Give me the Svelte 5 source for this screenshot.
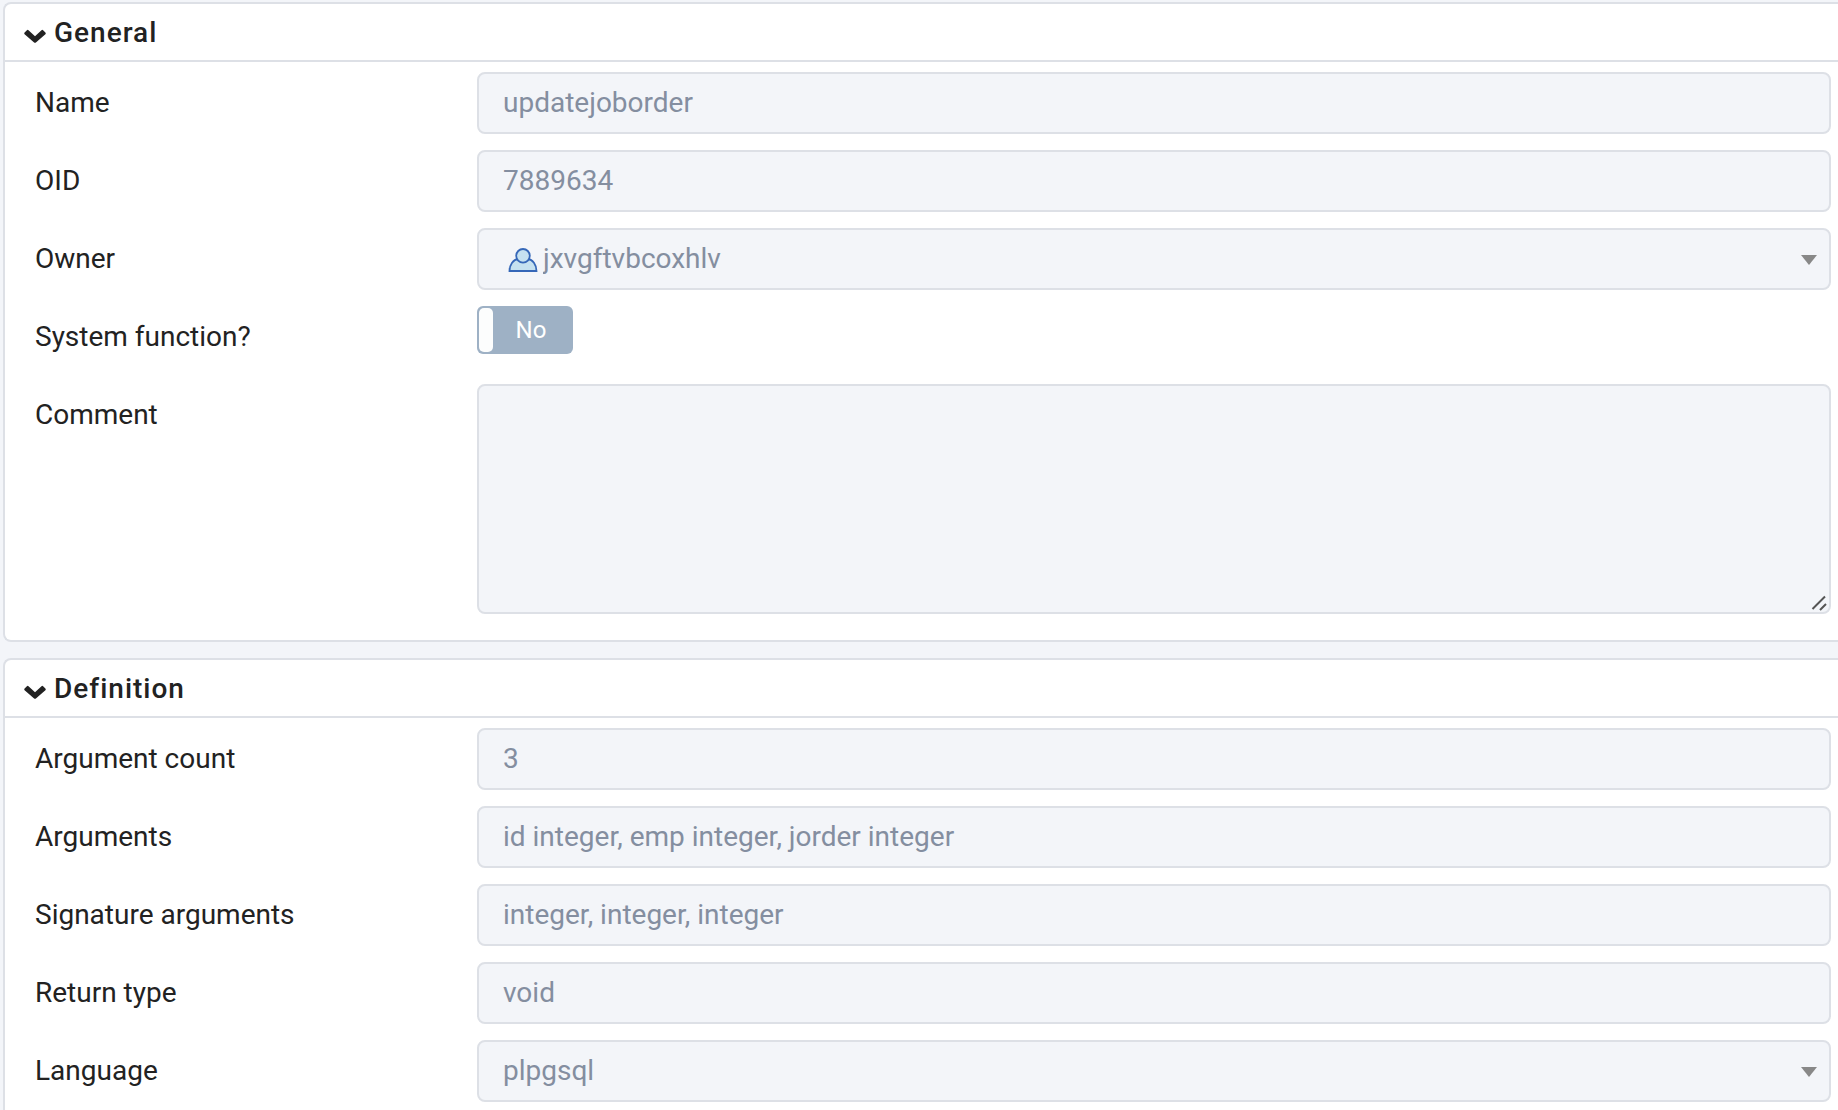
<script>
  let groups = $state([
    {
      id: 'general',
      title: 'General',
      open: true,
      fields: [
        { id: 'name', label: 'Name', type: 'text', value: 'updatejoborder' },
        { id: 'oid', label: 'OID', type: 'text', value: '7889634' },
        { id: 'owner', label: 'Owner', type: 'select', icon: 'role', value: 'jxvgftvbcoxhlv' },
        { id: 'sysfunc', label: 'System function?', type: 'switch', value: false },
        { id: 'comment', label: 'Comment', type: 'multiline', value: '' }
      ]
    },
    {
      id: 'definition',
      title: 'Definition',
      open: true,
      fields: [
        { id: 'pronargs', label: 'Argument count', type: 'text', value: '3' },
        { id: 'proargs', label: 'Arguments', type: 'text', value: 'id integer, emp integer, jorder integer' },
        { id: 'proargtypes', label: 'Signature arguments', type: 'text', value: 'integer, integer, integer' },
        { id: 'prorettype', label: 'Return type', type: 'text', value: 'void' },
        { id: 'lanname', label: 'Language', type: 'select', value: 'plpgsql' }
      ]
    }
  ]);
</script>

<main class="properties">
  {#each groups as group (group.id)}
    <section class="group">
      <h2 class:closed={!group.open}>
        <button type="button" aria-expanded={group.open} onclick={() => (group.open = !group.open)}>
          <svg class="chevron" viewBox="0 0 22 14" aria-hidden="true">
            <path d="M.6 3.6 2.9 1.2Q3.7.5 4.5 1.2L11 7.3l6.5-6.1q.8-.7 1.6 0l2.3 2.4q.7.8 0 1.6l-9.5 8.2q-.9.8-1.8 0L.6 5.2q-.7-.8 0-1.6z" />
          </svg>
          {group.title}
        </button>
      </h2>

      {#if group.open}
        <div class="fields">
          {#each group.fields as field (field.id)}
            <div class="row">
              <label for={field.id}>{field.label}</label>

              {#if field.type === 'text'}
                <input class="control" id={field.id} type="text" value={field.value} disabled />
              {:else if field.type === 'select'}
                <div class="stack">
                  <select class="control" class:with-icon={field.icon} id={field.id} disabled>
                    <option>{field.value}</option>
                  </select>
                  {#if field.icon}
                    <svg class="role" viewBox="0 0 30 24" aria-hidden="true">
                      <path d="M1.500 23C1.500 16.500 5.500 11.500 10 11h10c4.500.500 8.500 5.500 8.500 12z" />
                      <circle cx="15" cy="7.800" r="6.800" />
                    </svg>
                  {/if}
                  <svg class="arrow" viewBox="0 0 16 10" aria-hidden="true">
                    <path d="M0 0h16L8 10z" />
                  </svg>
                </div>
              {:else if field.type === 'switch'}
                <div class="stack switch">
                  <input id={field.id} type="checkbox" checked={field.value} disabled />
                  <span class="handle"></span>
                  <span class="state">{field.value ? 'Yes' : 'No'}</span>
                </div>
              {:else}
                <div class="stack">
                  <textarea class="control" id={field.id} value={field.value} disabled></textarea>
                  <svg class="grip" viewBox="0 0 16 16" aria-hidden="true">
                    <path d="M1.500 14 14 1.500M9 15l6-6" />
                  </svg>
                </div>
              {/if}
            </div>
          {/each}
        </div>
      {/if}
    </section>
  {/each}
</main>

<style>
  :global(body) {
    margin: 0;
    background: #f3f5f9;
    color: #222;
    font-family: Roboto, "Liberation Sans", sans-serif;
    font-size: 28px;
  }

  .properties {
    display: flex;
    flex-direction: column;
    gap: 16px;
    padding: 2px 0 0 3px;
  }

  .group {
    background: #fff;
    border: 2px solid #dde0e6;
    border-right: 0;
    border-radius: 8px 0 0 8px;
  }

  h2 {
    margin: 0;
    border-bottom: 2px solid #dde0e6;
    font-size: 28px;
  }

  h2.closed {
    border-bottom: 0;
  }

  h2 button {
    display: flex;
    align-items: center;
    gap: 8px;
    width: 100%;
    height: 56px;
    padding: 0 19px;
    border: 0;
    background: none;
    color: inherit;
    font: inherit;
    font-weight: 500;
    letter-spacing: 1px;
    text-align: left;
    cursor: pointer;
  }

  .chevron {
    width: 22px;
    height: 14px;
    margin-top: 8px;
    fill: #222;
  }

  .fields {
    display: flex;
    flex-direction: column;
    gap: 16px;
    padding: 10px 7px 26px 30px;
  }

  .row {
    display: grid;
    grid-template-columns: 442px 1fr;
    min-height: 62px;
  }

  label {
    padding-top: 10px;
    line-height: 42px;
  }

  .control {
    box-sizing: border-box;
    width: 100%;
    height: 62px;
    margin: 0;
    padding: 0 24px 2px;
    border: 2px solid #dde0e6;
    border-radius: 8px;
    background: #f3f5f9;
    color: #848ea0;
    font: inherit;
    opacity: 1;
    appearance: none;
  }

  textarea.control {
    display: block;
    height: 230px;
    padding: 10px 24px;
    resize: none;
  }

  .with-icon {
    padding-left: 64px;
  }

  /* icons and handles share one grid cell with the control below them */
  .stack {
    display: grid;
    align-items: center;
  }

  .stack > * {
    grid-area: 1 / 1;
  }

  .stack svg {
    pointer-events: none;
  }

  .role {
    width: 30px;
    height: 24px;
    margin: 2px 0 0 31px;
    fill: #c5e1f0;
    stroke: #3567b8;
    stroke-width: 1.8;
  }

  .arrow {
    justify-self: end;
    width: 16px;
    height: 10px;
    margin: 2px 14px 0 0;
    fill: #888;
  }

  .grip {
    align-self: end;
    justify-self: end;
    width: 16px;
    height: 16px;
    margin: 0 4px 3px 0;
    fill: none;
    stroke: #555;
    stroke-width: 2;
  }

  .switch {
    width: 96px;
    height: 48px;
  }

  .switch input {
    width: 100%;
    height: 100%;
    margin: 0;
    border-radius: 6px;
    background: #9eb1c5;
    appearance: none;
  }

  .handle {
    width: 14px;
    height: 44px;
    margin-left: 2px;
    border-radius: 5px;
    background: #fcfdfd;
    pointer-events: none;
  }

  .state {
    padding-left: 12px;
    color: #fff;
    font-size: 24px;
    line-height: 48px;
    text-align: center;
    pointer-events: none;
  }
</style>
